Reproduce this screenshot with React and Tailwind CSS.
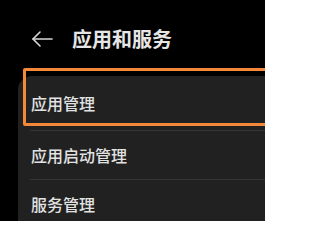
const ITEMS = ['应用管理', '应用启动管理', '服务管理']

export default function App() {
  return (
    <div
      className="relative w-[265px] h-[221px] overflow-hidden bg-black"
      style={{ fontFamily: '"Noto Sans CJK SC", "Noto Sans", sans-serif' }}
    >
      {/* header */}
      <div className="flex items-center h-[80px] pb-[2px] pl-[31px]">
        <svg width="22" height="16" viewBox="0 0 22 16" fill="none" stroke="#d8d8d8" strokeWidth="1.6" strokeLinecap="round" strokeLinejoin="round">
          <path d="M21 8H2" />
          <path d="M9 1L2 8l7 7" />
        </svg>
        <span className="ml-[19px] text-[20px] leading-none font-bold text-[#e6e6e6]">应用和服务</span>
      </div>

      {/* list card */}
      <div className="ml-[18px] -mt-[4px] bg-[#212121] rounded-tl-[14px] pl-[13px]">
        {ITEMS.map((t, i) => (
          <div key={t}>
            {i > 0 && <div className="h-px bg-[#353535] -ml-px" />}
            <div className={`flex items-center ${i === 0 ? 'h-[54px]' : 'h-[48px]'} text-[16px] font-medium text-[#e2e2e2]`}>
              {t}
            </div>
          </div>
        ))}
      </div>

      {/* highlight */}
      <div className="absolute left-[23px] top-[68px] w-[260px] h-[58px] border-[3px] border-[#f5893a] rounded-[2px]" />
    </div>
  )
}
